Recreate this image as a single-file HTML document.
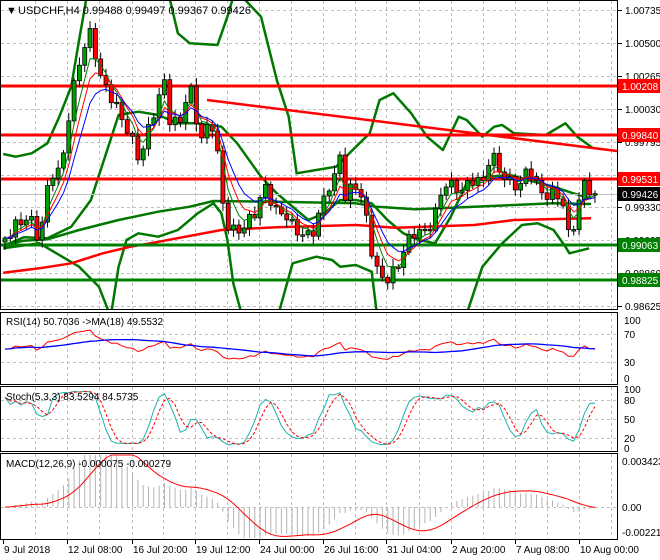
<!DOCTYPE html>
<html><head><meta charset="utf-8"><style>
html,body{margin:0;padding:0;background:#fff;width:660px;height:560px;overflow:hidden}
svg{display:block;font-family:"Liberation Sans",sans-serif}
</style></head><body>
<svg id="s" width="660" height="560" xmlns="http://www.w3.org/2000/svg">
<rect width="660" height="560" fill="#fff"/>
<g id="grid" stroke="#c0c0c0" stroke-dasharray="3,3" stroke-width="1"></g>
<g id="main"></g>
<g id="ind"></g>
<g fill="none" stroke="#000" stroke-width="1">
<rect x="0.5" y="0.5" width="617" height="309"/>
<rect x="0.5" y="312.5" width="617" height="72"/>
<rect x="0.5" y="386.5" width="617" height="65"/>
<rect x="0.5" y="453.5" width="617" height="86"/>
</g>
<g id="labels" font-size="10" fill="#000"></g>
<text x="6" y="14" font-size="11">▼</text>
<text x="18" y="14" font-size="11">USDCHF,H4  0.99488 0.99497 0.99367 0.99426</text>
<text x="6" y="325" font-size="10">RSI(14) 50.7036  -&gt;MA(18) 49.5532</text>
<text x="6" y="400" font-size="10">Stoch(5,3,3) 83.5294 84.5735</text>
<text x="6" y="467" font-size="10">MACD(12,26,9) -0.000075 -0.000279</text>
</svg>
<script>
var NS="http://www.w3.org/2000/svg";
function el(p,t,a,txt){var e=document.createElementNS(NS,t);for(var k in a)e.setAttribute(k,a[k]);if(txt!==undefined)e.textContent=txt;document.getElementById(p).appendChild(e);return e;}
function pl(p,pts,c,w,extra){var a={points:pts.map(function(q){return q[0].toFixed(1)+","+q[1].toFixed(1)}).join(" "),fill:"none",stroke:c,"stroke-width":w,"stroke-linejoin":"round"};for(var k in extra)a[k]=extra[k];return el(p,"polyline",a);}
function zp(a){return a.map(function(q){return [q[0]/2.529,q[1]/3];});}
var gx=[35,67,99,132,163,195,227,259,291,323,355,386,419,451,483,515,547,579,611];
gx.forEach(function(x){[[1,309],[313,384],[387,451],[454,539]].forEach(function(r){el("grid","line",{x1:x+.5,y1:r[0],x2:x+.5,y2:r[1]});});});
var prices=[1.00735,1.00500,1.00265,1.00030,0.99795,0.99560,0.99330,0.99095,0.98860,0.98625];
function py(p){return 10+(1.00735-p)*14030;}
prices.forEach(function(p){var y=Math.round(py(p))+.5;el("grid","line",{x1:1,y1:y,x2:617,y2:y});});
[334,362,400,419,438,507].forEach(function(y){el("grid","line",{x1:1,y1:y+.5,x2:617,y2:y+.5});});
var path=[[5,235],[20,225],[30,215],[40,240],[50,175],[60,170],[70,110],[80,60],[90,30],[95,50],[100,80],[110,95],[120,110],[130,140],[140,160],[150,120],[160,100],[165,80],[170,120],[180,120],[190,90],[195,110],[200,140],[210,120],[215,135],[220,180],[225,220],[235,230],[245,230],[255,210],[265,185],[275,215],[285,210],[295,230],[305,240],[315,225],[325,195],[335,180],[340,150],[345,195],[355,185],[365,210],[375,265],[385,285],[395,270],[405,245],[415,235],[425,230],[435,215],[445,185],[455,185],[465,190],[475,180],[485,180],[490,150],[500,175],[510,180],[520,185],[530,170],[540,190],[550,195],[560,200],[565,205],[570,245],[575,215],[580,200],[585,185],[590,190],[595,194]];
function interp(x){for(var i=1;i<path.length;i++){if(x<=path[i][0]){var a=path[i-1],b=path[i];return a[1]+(b[1]-a[1])*(x-a[0])/(b[0]-a[0]);}}return path[path.length-1][1];}
var N=112,cs=[];
for(var i=0;i<N;i++){var x=5+i*(590/(N-1));var y=interp(x)+6*Math.sin(i*2.3)+3*Math.cos(i*5.1);cs.push({x:x,c:y});}
cs[N-1].c=py(0.99426);
for(var i=0;i<N;i++){cs[i].o=i?cs[i-1].c:cs[i].c+4;var hi=Math.min(cs[i].o,cs[i].c)-2-Math.abs(6*Math.sin(i*1.7));var lo=Math.max(cs[i].o,cs[i].c)+2+Math.abs(6*Math.cos(i*1.3));cs[i].h=hi;cs[i].l=lo;}
var closes=cs.map(function(c){return c.c;});
function ema(a,n){var k=2/(n+1),r=[],v=a[0];for(var i=0;i<a.length;i++){v=i?a[i]*k+v*(1-k):a[i];r.push(v);}return r;}
function sma(a,n){var r=[];for(var i=0;i<a.length;i++){var s=0,c=0;for(var j=Math.max(0,i-n+1);j<=i;j++){s+=a[j];c++;}r.push(s/c);}return r;}
var clip=el("main","clipPath",{id:"cp"});var cr=document.createElementNS(NS,"rect");cr.setAttribute("x",1);cr.setAttribute("y",1);cr.setAttribute("width",616);cr.setAttribute("height",308);clip.appendChild(cr);
el("main","g",{"clip-path":"url(#cp)",id:"mg"});
var G="#007800";
pl("mg",zp([[8,462],[40,470],[80,460],[120,430],[150,350],[180,260],[200,120],[215,20],[225,-60]]),G,2.5);
pl("mg",zp([[420,-60],[430,0],[450,100],[480,130],[550,135],[575,50],[590,-10],[620,0],[660,50],[700,240],[730,350],[750,520],[800,510],[850,500],[900,440],[935,400],[960,300],[995,280],[1040,340],[1080,410],[1120,450],[1160,350],[1180,360],[1220,410],[1250,380],[1270,375],[1300,400],[1380,405],[1430,370],[1460,410],[1500,445]]),G,2.5);
pl("mg",zp([[8,738],[60,712],[120,715],[180,680],[230,600],[300,345],[350,335],[400,345],[450,370],[500,370],[560,380],[600,430],[660,530],[700,580],[740,620],[780,660],[820,640],[860,600],[900,600],[940,610],[980,660],[1020,700],[1060,720],[1100,730],[1140,650],[1180,550],[1230,530],[1290,525],[1350,545],[1400,560],[1450,580],[1495,595]]),G,2.5);
pl("mg",zp([[8,735],[60,722],[120,718],[200,690],[300,660],[400,635],[480,620],[540,603],[700,605],[900,610],[950,620],[1050,628],[1200,620],[1300,615],[1400,610],[1495,612]]),G,2.5);
pl("mg",zp([[8,745],[100,730],[200,800],[250,860],[280,950]]),G,2.5);
pl("mg",zp([[280,950],[300,800],[320,720],[350,700],[400,710],[450,690],[500,640],[540,610],[560,640],[575,720],[590,850],[615,960]]),G,2.5);
pl("mg",zp([[700,960],[740,790],[800,770],[840,780],[860,800],[900,795],[940,815],[955,960]]),G,2.5);
pl("mg",zp([[1175,960],[1220,800],[1270,730],[1320,675],[1360,670],[1400,690],[1430,740],[1440,760],[1490,745]]),G,2.5);
pl("mg",zp([[8,818],[100,805],[180,790],[260,760],[330,740],[380,730],[560,690],[700,682],[900,675],[1000,683],[1200,675],[1300,660],[1495,655]]),"#ff0000",2.5);
[[86,"#ff0000"],[135,"#ff0000"],[179,"#ff0000"],[245,"#008000"],[280,"#008000"]].forEach(function(l){el("mg","line",{x1:0,y1:l[0],x2:617,y2:l[0],stroke:l[1],"stroke-width":3});});
el("mg","line",{x1:207,y1:100,x2:617,y2:151,stroke:"#ff0000","stroke-width":2.5});
el("mg","line",{x1:1,y1:194.5,x2:617,y2:194.5,stroke:"#c0c0c0","stroke-width":1});
cs.forEach(function(c){el("mg","line",{x1:c.x,y1:c.h,x2:c.x,y2:c.l,stroke:"#000","stroke-width":1});var t=Math.min(c.o,c.c),h=Math.max(1.5,Math.abs(c.o-c.c));el("mg","rect",{x:c.x-2,y:t,width:4,height:h,fill:c.c<c.o?"#00a000":"#ff0000",stroke:"#000","stroke-width":0.8});});
pl("mg",cs.map(function(c,i){return [c.x,ema(closes,4)[i]];}),"#008000",1);
pl("mg",cs.map(function(c,i){return [c.x,ema(closes,6)[i]];}),"#ff0000",1);
pl("mg",cs.map(function(c,i){return [c.x,ema(closes,9)[i]];}),"#0000ff",1);
var pr=closes.map(function(y){return 1.00735-(y-10)/14030;});
var rsi=[],ag=0,al=0;for(var i=0;i<N;i++){var d=i?pr[i]-pr[i-1]:0;var gn=Math.max(d,0),ls=Math.max(-d,0);if(i==0){ag=0.0005;al=0.0005;}ag=(ag*13+gn)/14;al=(al*13+ls)/14;rsi.push(100-100/(1+ag/al));}
var rma=sma(rsi,18);
function ry(v){return 378-v*0.58;}
pl("ind",rsi.map(function(v,i){return [cs[i].x,ry(v)];}),"#ff0000",1);
pl("ind",rma.map(function(v,i){return [cs[i].x,ry(v)];}),"#0000ff",1.3);
var k=[];for(var i=0;i<N;i++){var hh=-1e9,ll=1e9;for(var j=Math.max(0,i-4);j<=i;j++){var h=1.00735-(cs[j].h-10)/14030,l=1.00735-(cs[j].l-10)/14030;hh=Math.max(hh,h);ll=Math.min(ll,l);}k.push(100*(pr[i]-ll)/(hh-ll||1));}
var ks=sma(k,3),ds=sma(ks,3);
function sy(v){return 448-v*0.59;}
pl("ind",ks.map(function(v,i){return [cs[i].x,sy(v)];}),"#20b2aa",1);
pl("ind",ds.map(function(v,i){return [cs[i].x,sy(v)];}),"#ff0000",1,{"stroke-dasharray":"3,2"});
var e12=ema(pr,12),e26=ema(pr,26),macd=e12.map(function(v,i){return v-e26[i];}),sig=sma(macd,9);
function my(v){return 507-v*13440*1.4;}
macd.forEach(function(v,i){el("ind","line",{x1:cs[i].x,y1:507,x2:cs[i].x,y2:Math.max(455,Math.min(538,my(v))),stroke:"#b4b4b4","stroke-width":1});});
pl("ind",sig.map(function(v,i){return [cs[i].x,Math.max(455,Math.min(538,my(v)))];}),"#ff0000",1);
prices.forEach(function(p){var y=Math.round(py(p));el("labels","line",{x1:618,y1:y+.5,x2:622,y2:y+.5,stroke:"#000"});el("labels","text",{x:625,y:y+4},p.toFixed(5));});
[[86,"1.00208","#ff0000"],[135,"0.99840","#ff0000"],[179,"0.99531","#ff0000"],[194,"0.99426","#000"],[245,"0.99063","#008000"],[280,"0.98825","#008000"]].forEach(function(b){el("labels","rect",{x:618,y:b[0]-7,width:42,height:14,fill:b[2]});el("labels","text",{x:622,y:b[0]+4,fill:"#fff"},b[1]);});
[[320,"100"],[334,"70"],[362,"30"],[378,"0"]].forEach(function(a){el("labels","text",{x:624,y:a[0]+4},a[1]);});
[[389,"100"],[400,"80"],[419,"50"],[438,"20"],[448,"0"]].forEach(function(a){el("labels","text",{x:624,y:a[0]+4},a[1]);});
[[461,"0.003423"],[507,"0.00"],[532,"-0.002211"]].forEach(function(a){el("labels","text",{x:622,y:a[0]+4},a[1]);});
[[3,"9 Jul 2018"],[67,"12 Jul 08:00"],[132,"16 Jul 20:00"],[195,"19 Jul 12:00"],[259,"24 Jul 00:00"],[323,"26 Jul 16:00"],[386,"31 Jul 04:00"],[451,"2 Aug 20:00"],[515,"7 Aug 08:00"],[579,"10 Aug 00:00"]].forEach(function(a){el("labels","line",{x1:a[0]+.5,y1:540,x2:a[0]+.5,y2:544,stroke:"#000"});el("labels","text",{x:a[0]+1,y:553},a[1]);});
</script>
</body></html>
